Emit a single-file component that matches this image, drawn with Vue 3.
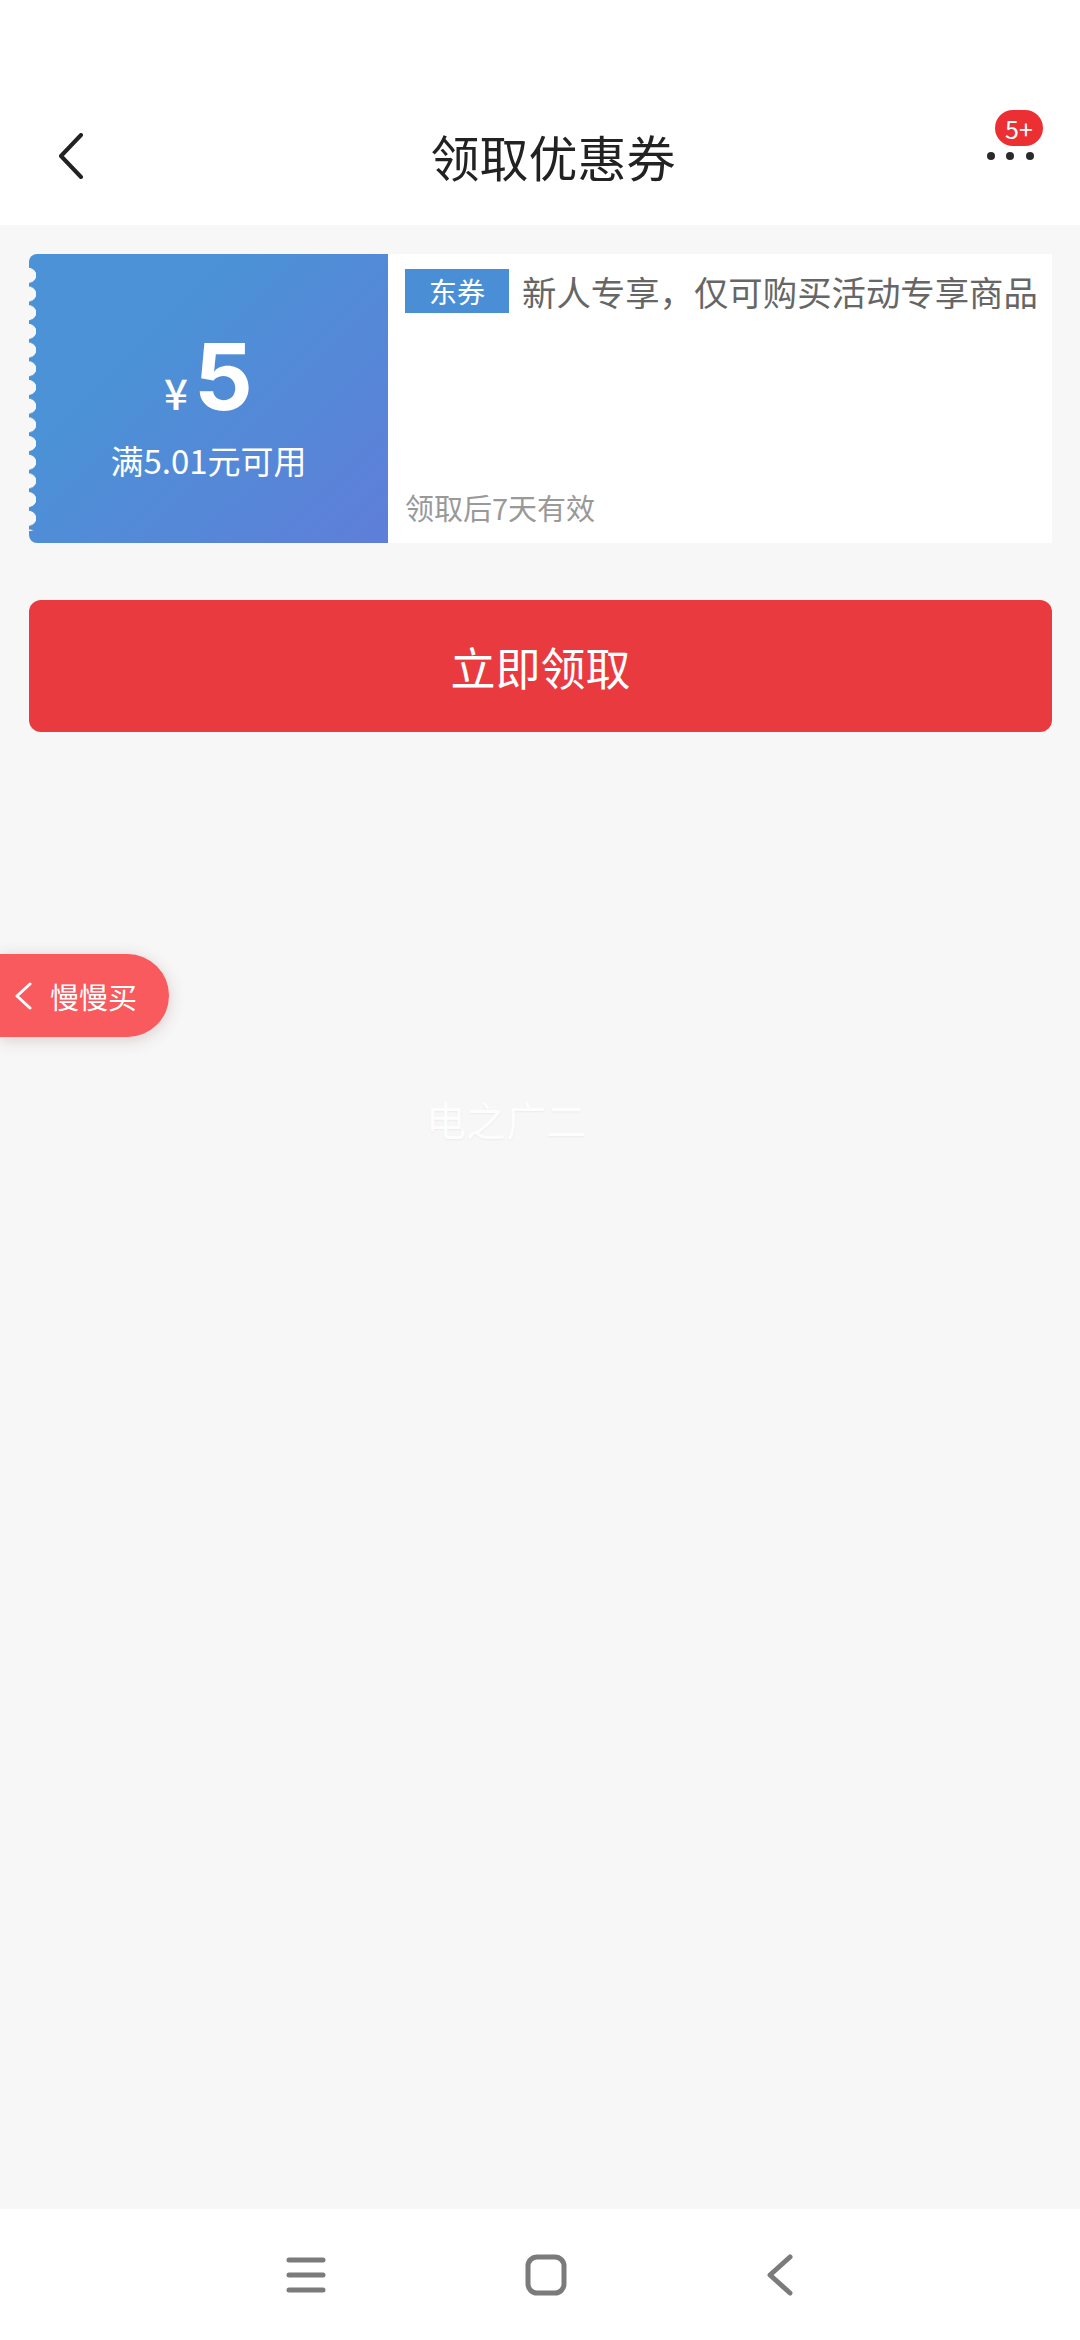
<script setup>
const coupon = {
  amount: 5,
  limit: '满5.01元可用',
  tag: '东券',
  title: '新人专享，仅可购买活动专享商品',
  expire: '领取后7天有效',
}
</script>

<template>
  <div class="page">
    <header class="nav-bar">
      <svg class="nav-back" width="26" height="46" viewBox="0 0 26 46">
        <path d="M23 2 L3 23 L23 44" fill="none" stroke="#222" stroke-width="4" stroke-linecap="round" stroke-linejoin="round" />
      </svg>
      <h1 class="nav-title">领取优惠券</h1>
      <div class="nav-more">
        <svg width="50" height="10" viewBox="0 0 50 10">
          <circle cx="5" cy="5" r="4" fill="#2a2a2a" />
          <circle cx="24" cy="5" r="4" fill="#2a2a2a" />
          <circle cx="44" cy="5" r="4" fill="#2a2a2a" />
        </svg>
        <span class="badge">5+</span>
      </div>
    </header>

    <main class="content">
      <section class="coupon">
        <div class="coupon-left">
          <div class="price"><span class="yen">¥</span><span class="amount">{{ coupon.amount }}</span></div>
          <div class="limit">{{ coupon.limit }}</div>
        </div>
        <div class="coupon-right">
          <div class="coupon-head">
            <span class="tag">{{ coupon.tag }}</span>
            <span class="coupon-title">{{ coupon.title }}</span>
          </div>
          <div class="expire">{{ coupon.expire }}</div>
        </div>
      </section>

      <button class="get-btn">立即领取</button>
    </main>

    <div class="float-btn">
      <svg width="18" height="28" viewBox="0 0 18 28">
        <path d="M16 2 L3 14 L16 26" fill="none" stroke="#fff" stroke-width="3" stroke-linecap="round" stroke-linejoin="round" />
      </svg>
      <span>慢慢买</span>
    </div>
    <div class="watermark">电之广二</div>

    <footer class="sys-nav">
      <svg width="40" height="36" viewBox="0 0 40 36">
        <path d="M3 3 H37 M3 18 H37 M3 33 H37" fill="none" stroke="#7b7b7b" stroke-width="5" stroke-linecap="round" />
      </svg>
      <svg width="42" height="42" viewBox="0 0 42 42">
        <rect x="3" y="3" width="36" height="36" rx="9" fill="none" stroke="#7b7b7b" stroke-width="5" />
      </svg>
      <svg width="28" height="42" viewBox="0 0 28 42">
        <path d="M24 3 L4 21 L24 39" fill="none" stroke="#7b7b7b" stroke-width="5" stroke-linecap="round" stroke-linejoin="round" />
      </svg>
    </footer>
  </div>
</template>

<style scoped>
.page {
  position: relative;
  display: flex;
  flex-direction: column;
  height: 2340px;
  background: #f7f7f7;
  font-family: "Noto Sans CJK SC", "Noto Sans", sans-serif;
  overflow: hidden;
}

.nav-bar {
  display: grid;
  grid-template-columns: 1fr auto 1fr;
  align-items: center;
  height: 80px;
  padding: 116px 32px 29px 58px;
  background: #fff;
}

.nav-back {
  display: block;
}

.nav-title {
  margin: 0;
  font-size: 49px;
  font-weight: 400;
  line-height: 80px;
  color: #222;
}

.nav-more {
  position: relative;
  justify-self: end;
  display: flex;
  align-items: center;
  padding-right: 12px;
}

.badge {
  position: absolute;
  top: -41px;
  right: 5px;
  width: 48px;
  height: 36px;
  border-radius: 18px;
  background: #ec2f33;
  color: #fff;
  font-size: 25px;
  line-height: 36px;
  text-align: center;
}

.content {
  flex: 1;
  padding: 29px 28px 0 29px;
}

.coupon {
  display: flex;
  height: 289px;
}

.coupon-left {
  position: relative;
  flex: 0 0 359px;
  display: flex;
  flex-direction: column;
  align-items: center;
  background: linear-gradient(135deg, #4b92d6 30%, #5f7ed9 100%);
  border-radius: 8px 0 0 8px;
  color: #fff;
}

/* scalloped edge */
.coupon-left::before {
  content: '';
  position: absolute;
  left: 0;
  top: 12px;
  bottom: 12px;
  width: 8px;
  background: radial-gradient(circle at 0 9.3px, #f7f7f7 7px, transparent 7.5px) 0 0 / 8px 18.7px repeat-y;
}

.price {
  display: flex;
  align-items: baseline;
  margin-top: 68px;
  height: 110px;
  line-height: 110px;
}

.yen {
  margin-right: 6px;
  font-family: "Noto Sans CJK SC", sans-serif;
  font-size: 42px;
  font-weight: 500;
}

.amount {
  font-family: Inter, sans-serif;
  font-size: 92px;
  font-weight: 700;
}

.limit {
  margin-top: 4px;
  font-size: 33px;
  line-height: 48px;
}

.coupon-right {
  flex: 1;
  display: flex;
  flex-direction: column;
  justify-content: space-between;
  padding: 15px 14px 14px 17px;
  background: #fff;
}

.coupon-head {
  display: flex;
  align-items: flex-start;
}

.tag {
  flex: 0 0 104px;
  height: 44px;
  background: #4a8fd5;
  color: #fff;
  font-size: 28px;
  line-height: 44px;
  text-align: center;
}

.coupon-title {
  margin-left: 13px;
  font-size: 34.4px;
  line-height: 44px;
  color: #666;
  white-space: nowrap;
}

.expire {
  font-size: 29px;
  line-height: 44px;
  color: #999;
}

.get-btn {
  display: block;
  width: 100%;
  height: 132px;
  margin-top: 57px;
  border: 0;
  border-radius: 12px;
  background: #e93b3f;
  color: #fff;
  font-family: inherit;
  font-size: 45px;
}

.float-btn {
  position: absolute;
  left: 0;
  top: 954px;
  display: flex;
  align-items: center;
  gap: 18px;
  width: 169px;
  height: 83px;
  padding-left: 14px;
  box-sizing: border-box;
  border-radius: 0 42px 42px 0;
  background: #f85a5e;
  box-shadow: 0 3px 16px rgba(120, 60, 50, 0.22);
  color: #fff;
  font-size: 29px;
}

.watermark {
  position: absolute;
  left: 426px;
  top: 1090px;
  font-size: 40px;
  line-height: 58px;
  color: #fdfdfd;
  text-shadow: 0 1px 2px rgba(0, 0, 0, 0.05);
}

.sys-nav {
  display: grid;
  grid-template-columns: 40px 42px 28px;
  justify-content: center;
  column-gap: 199px;
  align-items: center;
  height: 131px;
  padding-bottom: 0;
  background: #fff;
}

.sys-nav svg {
  display: block;
}
</style>
